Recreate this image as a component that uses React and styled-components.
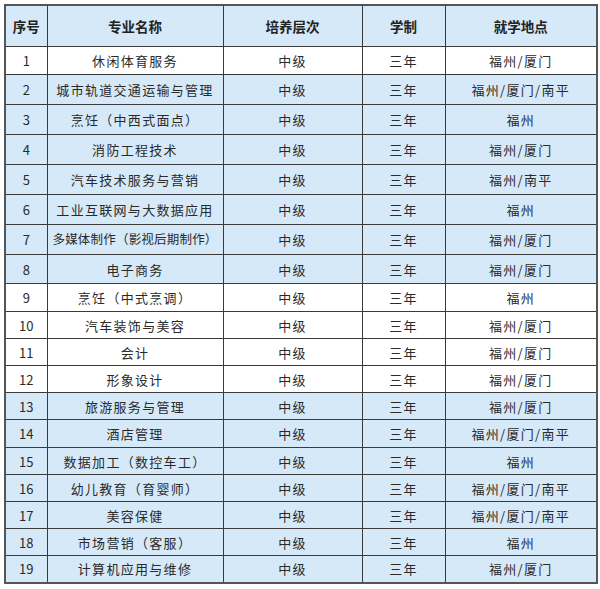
import React from "react";
import styled, { createGlobalStyle } from "styled-components";

const rows = [
  ["1", "休闲体育服务", "福州/厦门", false, 28],
  ["2", "城市轨道交通运输与管理", "福州/厦门/南平", true, 30],
  ["3", "烹饪（中西式面点）", "福州", true, 30],
  ["4", "消防工程技术", "福州/厦门", true, 30],
  ["5", "汽车技术服务与营销", "福州/南平", true, 30],
  ["6", "工业互联网与大数据应用", "福州", true, 30],
  ["7", "多媒体制作（影视后期制作）", "福州/厦门", true, 30],
  ["8", "电子商务", "福州/厦门", true, 29],
  ["9", "烹饪（中式烹调）", "福州", false, 28],
  ["10", "汽车装饰与美容", "福州/厦门", false, 27],
  ["11", "会计", "福州/厦门", false, 27],
  ["12", "形象设计", "福州/厦门", false, 27],
  ["13", "旅游服务与管理", "福州/厦门", true, 27],
  ["14", "酒店管理", "福州/厦门/南平", true, 28],
  ["15", "数据加工（数控车工）", "福州", true, 27],
  ["16", "幼儿教育（育婴师）", "福州/厦门/南平", true, 27],
  ["17", "美容保健", "福州/厦门/南平", true, 27],
  ["18", "市场营销（客服）", "福州", true, 27],
  ["19", "计算机应用与维修", "福州/厦门", true, 27],
];

const GlobalStyle = createGlobalStyle`
  body {
    margin: 0;
    background: #fff;
    font-family: "Noto Sans CJK SC", "Noto Sans", sans-serif;
  }
`;

const Page = styled.div`
  padding: 4px 0 0 4px;
`;

const Table = styled.table`
  width: 592px;
  border-collapse: collapse;
  table-layout: fixed;
  border: 2px solid #555;
  color: #2a2a2a;
`;

const HeadCell = styled.th`
  height: 40px;
  padding: 0;
  background: #d6e9f8;
  border: 1px solid #3a3a3a;
  font-size: 13.5px;
  font-weight: 700;
  color: #222;
  text-align: center;
`;

const Row = styled.tr`
  background: ${(p) => (p.$blue ? "#d6e9f8" : "#fff")};
`;

const Cell = styled.td`
  padding: 0;
  border: 1px solid #3a3a3a;
  text-align: center;
  white-space: nowrap;
  font-size: ${(p) => (p.$tight ? "12.5px" : "13px")};
  letter-spacing: ${(p) => (p.$num ? "0" : p.$tight ? "0.2px" : "1.3px")};
  line-height: 1;
`;

export default function App() {
  return (
    <Page>
      <GlobalStyle />
      <Table>
        <colgroup>
          <col style={{ width: 42 }} />
          <col style={{ width: 176 }} />
          <col style={{ width: 139 }} />
          <col style={{ width: 83 }} />
          <col style={{ width: 152 }} />
        </colgroup>
        <thead>
          <tr>
            <HeadCell>序号</HeadCell>
            <HeadCell>专业名称</HeadCell>
            <HeadCell>培养层次</HeadCell>
            <HeadCell>学制</HeadCell>
            <HeadCell>就学地点</HeadCell>
          </tr>
        </thead>
        <tbody>
          {rows.map(([no, name, place, blue, h]) => (
            <Row key={no} $blue={blue} style={{ height: h }}>
              <Cell $num>{no}</Cell>
              <Cell $tight={name.length > 12}>{name}</Cell>
              <Cell>中级</Cell>
              <Cell>三年</Cell>
              <Cell>{place}</Cell>
            </Row>
          ))}
        </tbody>
      </Table>
    </Page>
  );
}
